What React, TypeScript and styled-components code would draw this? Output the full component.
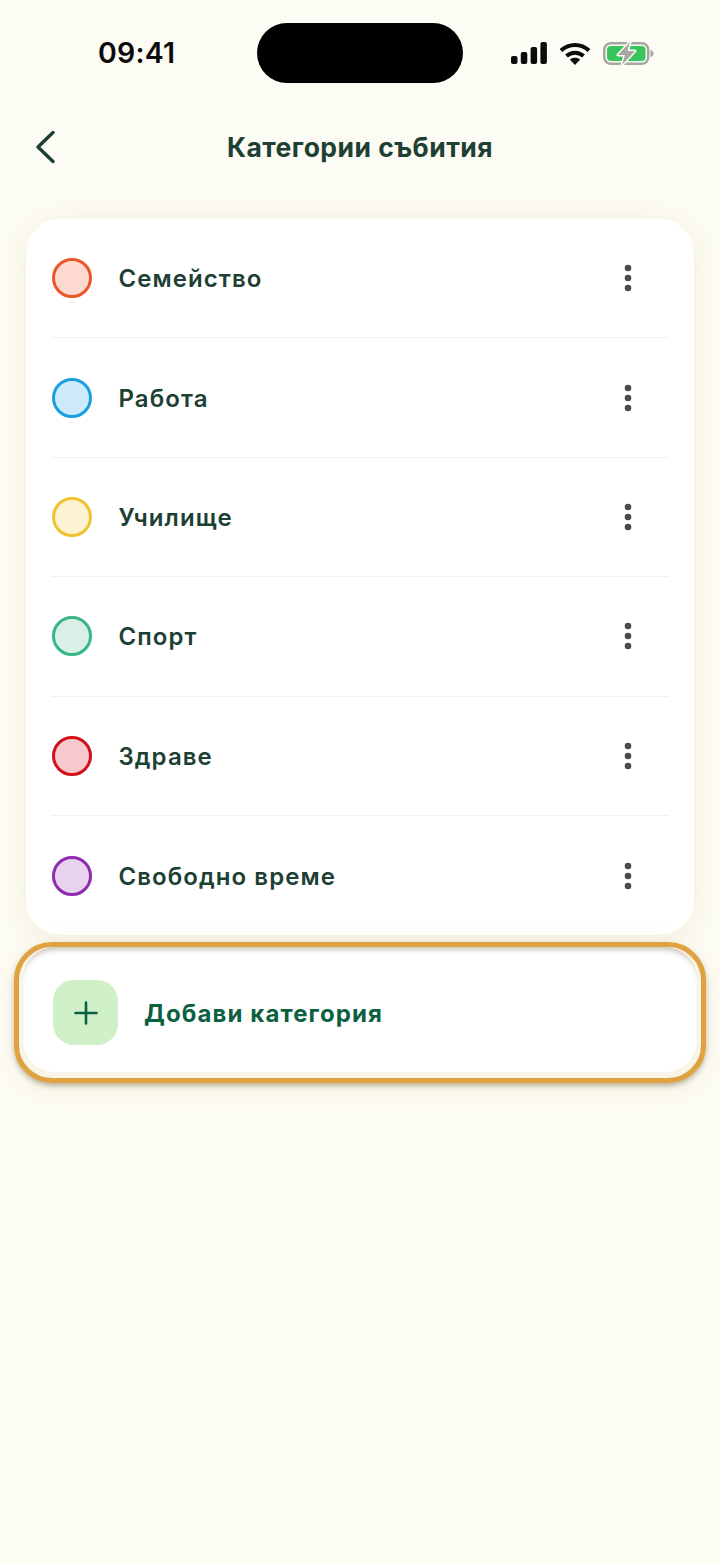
import React from 'react';
import styled, { createGlobalStyle } from 'styled-components';

const GlobalStyle = createGlobalStyle`
  html, body {
    margin: 0;
    padding: 0;
    background: #fdfcf4;
    font-family: Inter, "Noto Sans", sans-serif;
  }
`;

const Page = styled.div`
  width: 720px;
  height: 1564px;
  overflow: hidden;
  background: #fdfcf4;
`;

const StatusBar = styled.div`
  height: 83px;
  padding: 23px 0 0 98px;
  box-sizing: border-box;
  display: flex;
  align-items: center;
`;

const Time = styled.span`
  flex: none;
  width: 100px;
  font-size: 28.5px;
  line-height: 60px;
  font-weight: 600;
  letter-spacing: 0.2px;
  color: #0b0b0b;
`;

const Island = styled.div`
  flex: none;
  width: 206px;
  height: 60px;
  margin-left: 59px;
  border-radius: 30px;
  background: #000;
`;

const StatusIcons = styled.div`
  display: flex;
  align-items: center;
  gap: 12px;
  margin-left: 48px;
`;

const Header = styled.header`
  height: 64px;
  margin-top: 32px;
  display: flex;
  align-items: center;
  justify-content: center;
  position: relative;
`;

const BackButton = styled.button`
  position: absolute;
  left: 30px;
  top: 14px;
  width: 32px;
  height: 36px;
  padding: 0;
  border: 0;
  background: none;
  display: flex;
`;

const Title = styled.h1`
  margin: -1px 0 0;
  font-size: 26.5px;
  line-height: 32px;
  font-weight: 700;
  letter-spacing: 0.45px;
  color: #1e3f33;
`;

const Card = styled.section`
  margin: 40px 26px 0;
  padding: 0 26px;
  background: #fff;
  border-radius: 34px;
  box-shadow: 0 4px 30px rgba(190, 170, 110, 0.18);
`;

const Row = styled.div`
  height: 119.4px;
  box-sizing: border-box;
  display: flex;
  align-items: center;
  gap: 26.5px;
  border-bottom: 1.5px solid #f1f1ee;

  &:last-child {
    border-bottom: 0;
  }
`;

const Swatch = styled.span<{ $line: string; $fill: string }>`
  width: 40px;
  height: 40px;
  box-sizing: border-box;
  flex: none;
  border-radius: 50%;
  border: 3px solid ${p => p.$line};
  background: ${p => p.$fill};
`;

const Label = styled.span`
  flex: 1;
  padding-top: 1px;
  font-size: 24px;
  font-weight: 600;
  letter-spacing: 1.07px;
  color: #1e3f33;
`;

const MoreButton = styled.button`
  width: 40px;
  height: 40px;
  margin-right: 20px;
  padding: 0;
  border: 0;
  background: none;
  display: flex;
  align-items: center;
  justify-content: center;
`;

const AddFrame = styled.div`
  margin: 7px 14px 0;
  height: 141px;
  box-sizing: border-box;
  border: 5px solid #dfa23f;
  border-radius: 38px;
  background: #f8f4e8;
  box-shadow: 0 3px 5px rgba(90, 70, 30, 0.35), 0 6px 24px rgba(190, 170, 110, 0.16);
  padding: 0 4px 6px;
`;

const AddSurface = styled.button`
  width: 100%;
  height: 100%;
  padding: 6px 0 0 30px;
  border: 0;
  border-radius: 32px;
  background: #fff;
  box-shadow: inset 0 6px 5px -3px rgba(90, 70, 30, 0.3);
  display: flex;
  align-items: center;
  gap: 27px;
  font-family: inherit;
`;

const PlusTile = styled.span`
  width: 65px;
  height: 65px;
  border-radius: 21px;
  background: #d0f0c8;
  display: flex;
  align-items: center;
  justify-content: center;
`;

const AddLabel = styled.span`
  padding-top: 1px;
  margin-left: -1px;
  font-size: 24px;
  font-weight: 700;
  letter-spacing: 1.1px;
  color: #0b6040;
`;

const categories = [
  { name: 'Семейство', line: '#e8562a', fill: '#fdd9d0' },
  { name: 'Работа', line: '#1b9fe0', fill: '#cfeafa' },
  { name: 'Училище', line: '#f2c12e', fill: '#fdf3d2' },
  { name: 'Спорт', line: '#3cb587', fill: '#d8f0e6' },
  { name: 'Здраве', line: '#d0121b', fill: '#f8c9cc' },
  { name: 'Свободно време', line: '#8e2cad', fill: '#e8d3ef' },
];

const SignalIcon = () => (
  <svg width="36" height="22" viewBox="0 0 36 22">
    <rect x="0" y="14" width="6.5" height="8" rx="2" fill="#0b0b0b" />
    <rect x="9.8" y="10" width="6.5" height="12" rx="2" fill="#0b0b0b" />
    <rect x="19.6" y="5" width="6.5" height="17" rx="2" fill="#0b0b0b" />
    <rect x="29.4" y="0" width="6.5" height="22" rx="2" fill="#0b0b0b" />
  </svg>
);

const WifiIcon = () => (
  <svg width="32" height="23" viewBox="0 0 32 23" fill="none" stroke="#0b0b0b" strokeWidth="4">
    <path d="M2 8.5C10 1 22 1 30 8.5" />
    <path d="M7.5 14C12.5 9.5 19.5 9.5 24.5 14" />
    <path d="M16 23 10.8 17.6C13.8 15.2 18.2 15.2 21.2 17.6Z" fill="#0b0b0b" stroke="none" />
  </svg>
);

const BatteryIcon = () => (
  <svg width="51" height="23" viewBox="0 0 51 23">
    <rect x="1.25" y="1.25" width="44" height="20.5" rx="6.5" fill="none" stroke="#a5a8a0" strokeWidth="2.5" />
    <rect x="4" y="4" width="38.5" height="15" rx="4" fill="#39c55e" />
    <path d="M47.5 8v7c1.8-.5 3-1.8 3-3.5S49.3 8.5 47.5 8Z" fill="#a5a8a0" />
    <path
      d="M27 0 15 13h7l-3 10 13-14h-7.5Z"
      fill="#a5a8a0"
      stroke="#fdfcf4"
      strokeWidth="3"
      strokeLinejoin="round"
      paintOrder="stroke"
    />
  </svg>
);

const ChevronIcon = () => (
  <svg width="32" height="36" viewBox="0 0 32 36" fill="none">
    <path d="M23 3.5 8 18l15 14.5" stroke="#1e3f33" strokeWidth="3.4" strokeLinecap="round" strokeLinejoin="round" />
  </svg>
);

const DotsIcon = () => (
  <svg width="8" height="28" viewBox="0 0 8 28" fill="#4a4a4a">
    <circle cx="4" cy="4" r="3.3" />
    <circle cx="4" cy="14" r="3.3" />
    <circle cx="4" cy="24" r="3.3" />
  </svg>
);

const PlusIcon = () => (
  <svg width="24" height="24" viewBox="0 0 24 24" fill="none">
    <path d="M12 1.5v21M1.5 12h21" stroke="#0d5f43" strokeWidth="2.6" strokeLinecap="round" />
  </svg>
);

const App = () => (
  <Page>
    <GlobalStyle />
    <StatusBar>
      <Time>09:41</Time>
      <Island />
      <StatusIcons>
        <SignalIcon />
        <WifiIcon />
        <BatteryIcon />
      </StatusIcons>
    </StatusBar>
    <Header>
      <BackButton aria-label="Назад">
        <ChevronIcon />
      </BackButton>
      <Title>Категории събития</Title>
    </Header>
    <Card>
      {categories.map(c => (
        <Row key={c.name}>
          <Swatch $line={c.line} $fill={c.fill} />
          <Label>{c.name}</Label>
          <MoreButton aria-label="Още">
            <DotsIcon />
          </MoreButton>
        </Row>
      ))}
    </Card>
    <AddFrame>
      <AddSurface>
        <PlusTile>
          <PlusIcon />
        </PlusTile>
        <AddLabel>Добави категория</AddLabel>
      </AddSurface>
    </AddFrame>
  </Page>
);

export default App;
